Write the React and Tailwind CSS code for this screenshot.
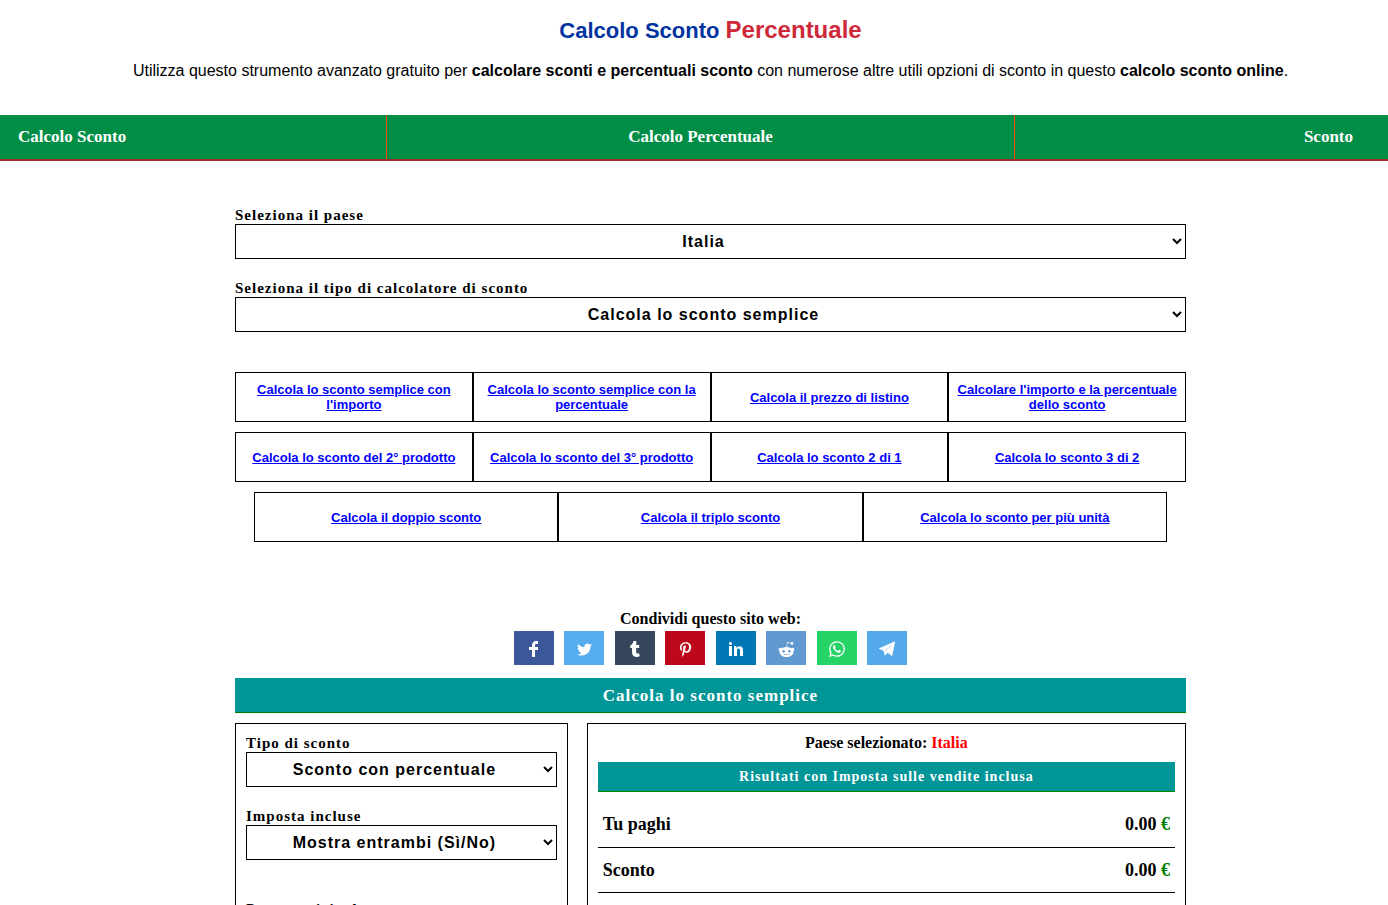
import React, { useState } from 'react'
import { FaTwitter, FaTumblr, FaPinterestP, FaRedditAlien, FaWhatsapp } from 'react-icons/fa'

const countries = ['Italia', 'Francia', 'Germania', 'Spagna']

const linkRows = [
  ["Calcola lo sconto semplice con l'importo", 'Calcola lo sconto semplice con la percentuale', 'Calcola il prezzo di listino', "Calcolare l'importo e la percentuale dello sconto"],
  ['Calcola lo sconto del 2° prodotto', 'Calcola lo sconto del 3° prodotto', 'Calcola lo sconto 2 di 1', 'Calcola lo sconto 3 di 2'],
  ['Calcola il doppio sconto', 'Calcola il triplo sconto', 'Calcola lo sconto per più unità'],
]

function FacebookIcon({ size }) {
  return (
    <svg width={size} height={size} viewBox="0 0 40 40" fill="currentColor">
      <path d="m21.7 16.7h5v5h-5v11.6h-5v-11.6h-5v-5h5v-2.1c0-2 0.6-4.5 1.8-5.9 1.3-1.3 2.8-2 4.7-2h3.5v5h-3.5c-0.9 0-1.5 0.6-1.5 1.5v3.5z" />
    </svg>
  )
}

function LinkedinIcon({ size }) {
  return (
    <svg width={size} height={size} viewBox="0 0 40 40" fill="currentColor">
      <path d="m13.3 31.7h-5v-16.7h5v16.7z m18.4 0h-5v-8.9c0-2.4-0.9-3.5-2.5-3.5-1.3 0-2.1 0.6-2.5 1.9v10.5h-5s0-15 0-16.7h3.9l0.3 3.3h0.1c1-1.6 2.7-2.8 4.9-2.8 1.7 0 3.1 0.5 4.2 1.7 1 1.2 1.6 2.8 1.6 5.1v9.4z m-18.3-20.9c0 1.4-1.1 2.5-2.6 2.5s-2.5-1.1-2.5-2.5 1.1-2.5 2.5-2.5 2.6 1.2 2.6 2.5z" />
    </svg>
  )
}

function TelegramIcon({ size }) {
  return (
    <svg width={size} height={size} viewBox="0 0 16 16" fill="currentColor">
      <path d="M.3 7.200 15.500.6c.3-.1.5.1.5.4l-2.700 13.500c-.1.4-.4.5-.7.300L8.500 11.800 6.300 14.200c-.3.3-.6.2-.7-.2L4.500 9.700.3 8c-.4-.2-.4-.6 0-.8z" />
      <path d="M5.600 9.900 12 4.800" fill="none" stroke="#54a9eb" strokeWidth="0.4" />
    </svg>
  )
}

const shares = [
  { name: 'Facebook', Icon: FacebookIcon, size: 24, color: 'bg-[#3b5998]' },
  { name: 'Twitter', Icon: FaTwitter, size: 15, color: 'bg-[#55acee]' },
  { name: 'Tumblr', Icon: FaTumblr, size: 16, color: 'bg-[#36465d]' },
  { name: 'Pinterest', Icon: FaPinterestP, size: 15, color: 'bg-[#bd081c]' },
  { name: 'LinkedIn', Icon: LinkedinIcon, size: 24, color: 'bg-[#0077b5]' },
  { name: 'Reddit', Icon: FaRedditAlien, size: 17, color: 'bg-[#5f99cf]' },
  { name: 'WhatsApp', Icon: FaWhatsapp, size: 18, color: 'bg-[#25d366]' },
  { name: 'Telegram', Icon: TelegramIcon, size: 16, color: 'bg-[#54a9eb]' },
]

function SelectField({ id, label, options, value, onChange }) {
  return (
    <div>
      <label htmlFor={id} className="block text-[15px] leading-[18px] font-bold tracking-[1px]">{label}</label>
      <select
        id={id}
        value={value}
        onChange={onChange}
        className="block w-full h-[35px] border border-black bg-white pr-[2px] text-center font-['Liberation_Sans',sans-serif] text-base font-bold tracking-[1px]"
      >
        {options.map(o => <option key={o}>{o}</option>)}
      </select>
    </div>
  )
}

function ResultRow({ label }) {
  return (
    <tr className="border-b border-black">
      <th scope="row" className="h-[45px] px-[5px] text-left">{label}</th>
      <td className="h-[45px] px-[5px] text-right font-bold">0.00 <span className="text-[#008000]">€</span></td>
    </tr>
  )
}

export default function App() {
  const [country, setCountry] = useState('Italia')

  return (
    <div className="min-h-screen bg-white text-black font-['Liberation_Serif',serif]">
      <header className="pt-4 pl-[33px] pb-[34px] text-center font-['Liberation_Sans',sans-serif]">
        <h1 className="text-[22px] leading-7 font-bold text-[#0033a0]">
          Calcolo Sconto <span className="text-2xl leading-7 text-[#ce2939]">Percentuale</span>
        </h1>
        <p className="mt-[15px] text-base leading-[21px]">
          Utilizza questo strumento avanzato gratuito per <b>calcolare sconti e percentuali sconto</b> con numerose altre utili opzioni di sconto in questo <b>calcolo sconto online</b>.
        </p>
      </header>

      <nav className="flex h-[46px] border-b-2 border-[#a52a2a] bg-[#008d45] text-[17px] leading-[44px] font-bold text-white">
        <a href="#sconto" className="w-[387px] border-r border-[#ff4500] pl-[18px]">Calcolo Sconto</a>
        <a href="#percentuale" className="flex-1 border-r border-[#ff4500] text-center">Calcolo Percentuale</a>
        <a href="#home" className="w-[373px] pr-[35px] text-right">Sconto</a>
      </nav>

      <main className="pl-[33px] pt-[45px]">
        <div className="mx-auto w-[951px] max-w-full">
          <div className="flex flex-col gap-5">
            <SelectField id="paese" label="Seleziona il paese" options={countries} value={country} onChange={e => setCountry(e.target.value)} />
            <SelectField id="tipo" label="Seleziona il tipo di calcolatore di sconto" options={['Calcola lo sconto semplice', 'Calcola il doppio sconto']} />
          </div>

          <div className="mt-10 flex flex-col gap-[10px]">
            {linkRows.map((row, i) => (
              <div key={i} className={row.length === 3 ? 'flex px-[19px]' : 'flex'}>
                {row.map(text => (
                  <div key={text} className="flex h-[50px] flex-1 items-center justify-center border border-black px-[5px] text-center">
                    <a href="#calcola" className="font-['Liberation_Sans',sans-serif] text-[13px] leading-[15px] font-bold text-[#0000ff] underline">{text}</a>
                  </div>
                ))}
              </div>
            ))}
          </div>

          <section className="mt-[67px] text-center">
            <p className="text-base leading-[19px] font-bold">Condividi questo sito web:</p>
            <div className="mx-auto mt-[3px] flex w-[393px] max-w-full justify-between">
              {shares.map(({ name, Icon, size, color }) => (
                <a key={name} href="#share" aria-label={name} className={`flex h-[34px] w-10 items-center justify-center pt-[2px] text-white ${color}`}>
                  <Icon size={size} />
                </a>
              ))}
            </div>
          </section>

          <h2 className="mt-[13px] h-[35px] border-b border-[#008000] bg-[#009698] text-center text-[17px] leading-[35px] font-bold tracking-[1px] text-white">
            Calcola lo sconto semplice
          </h2>

          <div className="mt-[10px] flex gap-[19px]">
            <form className="w-[35%] border border-black p-[10px]">
              <div className="flex flex-col gap-5">
                <SelectField id="tipo-sconto" label="Tipo di sconto" options={['Sconto con percentuale', 'Sconto con importo']} />
                <SelectField id="imposta" label="Imposta incluse" options={['Mostra entrambi (Sì/No)', 'Sì', 'No']} />
              </div>
              <div className="mt-10">
                <label htmlFor="prezzo" className="block text-[15px] leading-[18px] font-bold tracking-[1px]">Prezzo originale</label>
                <input id="prezzo" type="number" className="block h-[35px] w-full border border-black text-center" />
              </div>
            </form>

            <section className="flex-1 border border-black p-[10px]">
              <p className="text-center text-base leading-[18px] font-bold">
                Paese selezionato: <span className="text-[#ff0000]">{country}</span>
              </p>
              <h3 className="mt-[10px] h-[30px] border-b border-[#008000] bg-[#009698] text-center text-sm leading-[29px] font-bold tracking-[1px] text-white">
                Risultati con Imposta sulle vendite inclusa
              </h3>
              <table className="mt-[10px] w-full border-collapse text-lg">
                <tbody>
                  <ResultRow label="Tu paghi" />
                  <ResultRow label="Sconto" />
                </tbody>
              </table>
            </section>
          </div>
        </div>
      </main>
    </div>
  )
}
